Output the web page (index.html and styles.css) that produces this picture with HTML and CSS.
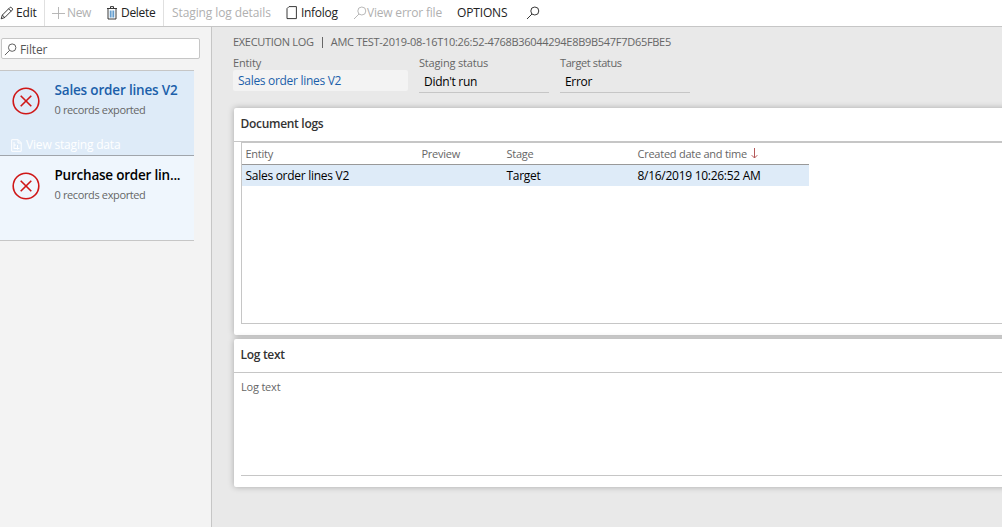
FILE: index.html
```html
<!DOCTYPE html>
<html lang="en">
<head>
<meta charset="utf-8">
<title>Execution log</title>
<link rel="stylesheet" href="styles.css">
</head>
<body>
<header class="toolbar">
  <button class="tool edit"><svg width="14" height="14" viewBox="0 0 14 14"><path d="M1.2 12.8l1.1-3.7 7.4-7.4q.9-.9 1.9 0l.6.6q.9.9 0 1.8l-7.4 7.4zM2.3 9.1l2.5 2.4M8.6 2.8l2.5 2.5"/></svg><span>Edit</span></button>
  <button class="tool new off"><svg width="14" height="14" viewBox="0 0 14 14"><path d="M7.5 1v12M1 7.5h13"/></svg><span>New</span></button>
  <button class="tool delete"><svg width="10" height="14" viewBox="0 0 10 14"><path d="M0 2.5h10M3.5 2V.6h3V2M1 3v10h8V3"/><path class="blue" d="M3.3 4.5v7M5 4.5v7M6.7 4.5v7"/></svg><span>Delete</span></button>
  <button class="tool staging off"><span>Staging log details</span></button>
  <button class="tool infolog"><svg width="12" height="14" viewBox="0 0 12 14"><path d="M3 .6h7.4v12H1V2.6z"/></svg><span>Infolog</span></button>
  <button class="tool viewerror off"><svg width="14" height="14" viewBox="0 0 14 14"><circle cx="8.8" cy="5" r="4"/><path d="M6 8L1 13"/></svg><span>View error file</span></button>
  <button class="tool options"><span>OPTIONS</span></button>
  <button class="tool search" aria-label="Search"><svg width="14" height="14" viewBox="0 0 14 14"><circle cx="8.8" cy="5" r="4"/><path d="M6 8L1 13"/></svg></button>
</header>
<div class="body">
  <aside class="sidebar">
    <label class="filter"><svg width="13" height="13" viewBox="0 0 14 14"><circle cx="8.8" cy="5" r="4"/><path d="M6 8L1 13"/></svg><span>Filter</span></label>
    <section class="card selected">
      <div class="card-main">
        <svg class="error" width="28" height="28" viewBox="0 0 28 28"><circle cx="14" cy="14" r="12.8"/><path d="M8.7 8.7l10.6 10.6M19.3 8.7L8.7 19.3"/></svg>
        <div><h2><span>Sales order lines V2</span></h2><p><span>0 records exported</span></p></div>
      </div>
      <a class="stage-link"><svg width="11" height="13" viewBox="0 0 11 13"><path d="M.7.7h6.5l3 3v8.6H.7zM7 .7V4h3M3 3v7M3 6h2M3 9.5h5.5M6.5 6v4.5"/></svg><span>View staging data</span></a>
    </section>
    <section class="card second">
      <div class="card-main">
        <svg class="error" width="28" height="28" viewBox="0 0 28 28"><circle cx="14" cy="14" r="12.8"/><path d="M8.7 8.7l10.6 10.6M19.3 8.7L8.7 19.3"/></svg>
        <div><h2><span>Purchase order lin...</span></h2><p><span>0 records exported</span></p></div>
      </div>
    </section>
  </aside>
  <main class="main">
    <h1 class="crumb"><span class="crumb-a">EXECUTION LOG</span><i></i><span class="crumb-b">AMC TEST-2019-08-16T10:26:52-4768B36044294E8B9B547F7D65FBE5</span></h1>
    <div class="fields">
      <div class="field wide"><label>Entity</label><a class="value"><span>Sales order lines V2</span></a></div>
      <div class="field"><label>Staging status</label><div class="value"><span>Didn't run</span></div></div>
      <div class="field"><label>Target status</label><div class="value"><span>Error</span></div></div>
    </div>
    <section class="panel docs">
      <h3><span>Document logs</span></h3>
      <div class="grid">
        <div class="row head"><span>Entity</span><span>Preview</span><span>Stage</span><span class="date"><b>Created date and time</b><svg width="7" height="11" viewBox="0 0 7 11"><path d="M3.5 0v10M.7 7.2l2.8 2.8 2.8-2.8"/></svg></span></div>
        <div class="row data"><span>Sales order lines V2</span><span></span><span>Target</span><span class="date">8/16/2019 10:26:52 AM</span></div>
      </div>
    </section>
    <section class="panel log">
      <h3><span>Log text</span></h3>
      <div class="logbox"><label>Log text</label></div>
    </section>
  </main>
</div>
</body>
</html>
```
FILE: styles.css
```css
* { box-sizing: border-box; }
body { margin: 0; width: 1002px; height: 527px; overflow: hidden; font: 12px/16px "Open Sans", "Noto Sans", sans-serif; color: #222; background: #fff; display: flex; flex-direction: column; }
h1, h2, h3, p { margin: 0; font-weight: 400; }
svg { fill: none; stroke: currentColor; stroke-width: 1; flex: none; }
label { display: block; }

.toolbar { height: 27px; flex: none; display: flex; align-items: stretch; border-bottom: 1px solid #c6c6c6; }
.tool { display: flex; align-items: center; border: 0; background: none; padding: 0; font: inherit; color: #222; white-space: nowrap; letter-spacing: -.15px; }
.tool.off { color: #b0b0b0; }
.tool svg { stroke-width: .9; }
.tool .blue { stroke: #2b7bbd; }
.edit { width: 45px; gap: 2px; border-right: 1px solid #e0e0e0; }
.new { width: 62px; padding-left: 6px; gap: 2px; letter-spacing: -.4px; }
.delete { width: 57px; gap: 4px; border-right: 1px solid #e0e0e0; letter-spacing: -.3px; }
.staging { width: 122px; padding-left: 8px; letter-spacing: -.1px; }
.infolog { width: 67px; gap: 3px; letter-spacing: -.3px; }
.viewerror { width: 104px; letter-spacing: -.2px; }
.options { width: 69px; }

.body { flex: 1; display: flex; }
.sidebar { width: 212px; flex: none; background: #f3f3f3; border-right: 1px solid #c6c6c6; padding-top: 11px; }
.filter { display: flex; align-items: center; gap: 3px; width: 199px; height: 21px; margin: 0 0 11px 1px; padding: 2px 0 0 2px; background: #fff; border: 1px solid #c6c6c6; border-radius: 2px; color: #555; letter-spacing: -.15px; }
.card { width: 194px; height: 85px; border-bottom: 1px solid #c6c6c6; background: #eff6fd; display: flex; flex-direction: column; justify-content: space-between; }
.selected { height: 86px; background: #deebf8; border-top: 1px solid #c6c6c6; border-bottom-color: #a0a5ab; }
.card-main { display: flex; gap: 14.5px; padding: 10px 0 0 12px; white-space: nowrap; }
.error { color: #cf1717; stroke-width: 1.6; margin-top: 6px; }
.card h2 { font-size: 13.5px; line-height: 19px; font-weight: 600; color: #000; letter-spacing: -.22px; }
.card.selected h2 { color: #1b5faa; letter-spacing: -.17px; }
.card p { font-size: 11px; margin-top: 2px; color: #666; letter-spacing: -.37px; }
.stage-link { display: flex; align-items: center; gap: 4px; padding: 0 0 2px 11px; color: #fff; letter-spacing: -.18px; }

.main { flex: 1; min-width: 0; overflow: hidden; padding: 7px 0 0 22px; background: #e9e9e9; }
.crumb { display: flex; align-items: center; height: 16px; margin-left: -1px; font-size: 11px; color: #666; white-space: nowrap; letter-spacing: -.3px; }
.crumb i { width: 1px; height: 11px; margin: 0 8px; background: #666; }
.crumb-b { letter-spacing: -.285px; }
.fields { display: flex; gap: 11px; margin: 5px 0 15px -1px; height: 38px; }
.field { width: 130px; white-space: nowrap; }
.wide { width: 175px; }
.field label { font-size: 11px; color: #666; letter-spacing: -.17px; }
.field + .field + .field label { letter-spacing: -.4px; }
.field .value { display: flex; align-items: center; height: 22px; padding-left: 5px; border-bottom: 1px solid #c6c6c6; color: #000; letter-spacing: -.3px; }
.field a.value { height: 21px; margin-top: -1px; background: #f3f3f3; border: 0; border-radius: 2px; color: #1b5faa; }
.panel { width: 780px; background: #fff; border-radius: 2px 0 0 2px; box-shadow: 0 0 6px rgba(0, 0, 0, .28); }
.docs { height: 227px; margin-bottom: 4px; }
.log { height: 148px; }
.panel h3 { height: 34px; padding: 8px 0 0 6.5px; border-bottom: 1px solid #c6c6c6; font-weight: 600; font-size: 12px; color: #333; letter-spacing: -.3px; }
.grid { height: 182px; margin-left: 7px; border: 1px solid #c6c6c6; border-right: 0; }
.row { display: grid; grid-template-columns: 176px 85px 131px 1fr; width: 567px; padding-left: 3.5px; align-items: center; white-space: nowrap; color: #000; letter-spacing: -.28px; }
.head { height: 22px; border-bottom: 1px solid #999; font-size: 11px; color: #666; letter-spacing: -.25px; }
.head b { font-weight: 400; }
.date { display: flex; align-items: center; gap: 4px; }
.date svg { color: #b45858; }
.data { height: 21px; background: #deebf8; }
.logbox { height: 103px; margin-left: 7px; padding-top: 6px; border-bottom: 1px solid #c6c6c6; font-size: 11px; color: #666; letter-spacing: -.2px; }
```
